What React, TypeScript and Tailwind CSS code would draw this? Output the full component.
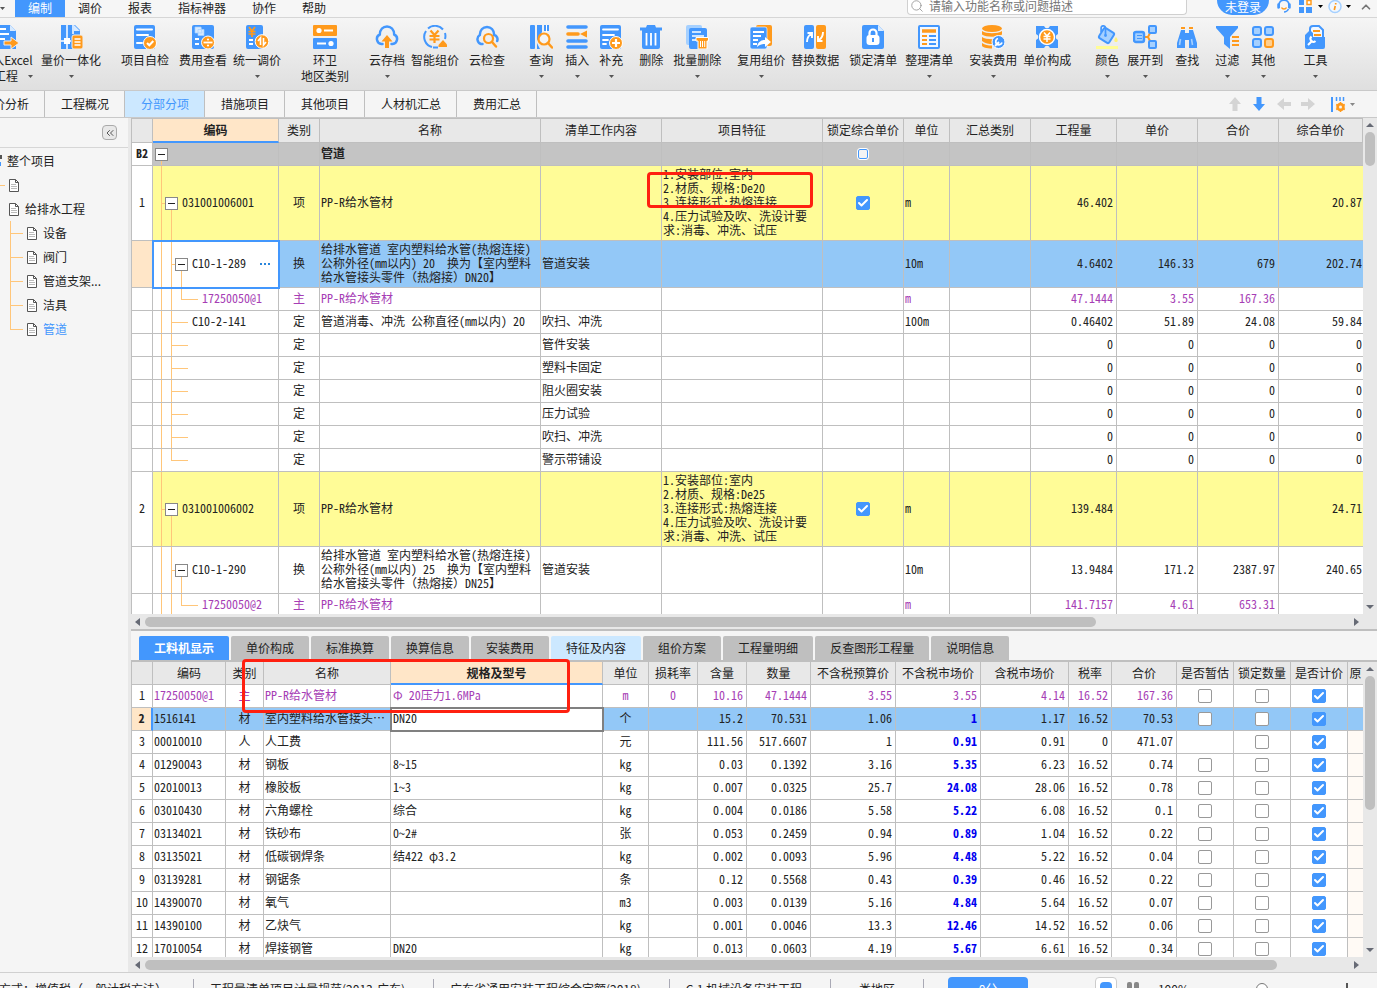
import React from 'react';
import { Check, ChevronUp, ChevronsLeft, Search } from 'lucide-react';

const B = '#4397fd';
const O = '#ff9a1c';
const L = '#a5d0ff';

const ICONS: Record<string, React.ReactNode> = {
  excel: (
    <>
      <path d="M1 0h14l6 6v18H1z" fill={B} />
      <path d="M15 0v6h6z" fill="#d7eaff" />
      <path d="M5 4h6M5 9h9M5 14h5" stroke="#fff" strokeWidth="2" />
      <path d="M9 16h7v-4l8 6-8 6v-4H9z" fill={O} stroke="#eee" />
    </>
  ),
  quantity: (
    <>
      <path d="M2 0h14l5 5v19H2z" fill={B} />
      <path d="M15 0v6h6z" fill="#d7eaff" />
      <path d="M8 0v24M2 16h10M14 0v9" stroke="#fff" strokeWidth="1.5" />
      <path d="M5 13h6v6H5z" fill="#fff" />
      <rect x="13" y="10" width="11" height="14" rx="2" fill={O} stroke="#eee" />
      <path d="M15.500 14h6M15.500 17h6M15.500 20h6" stroke="#fff" strokeWidth="1.300" />
    </>
  ),
  selfCheck: (
    <>
      <rect x="1" width="21" height="24" rx="2" fill={B} />
      <path d="M4 4.500h15M4 10h11M4 18h5" stroke="#fff" strokeWidth="2" strokeLinecap="round" />
      <circle cx="17" cy="18" r="6.500" fill={O} stroke="#fff" />
      <path d="M14 18l2.300 2.300 4-4.300" fill="none" stroke="#fff" strokeWidth="2" />
    </>
  ),
  feeView: (
    <>
      <rect x="1" width="22" height="24" rx="2" fill={B} />
      <path d="M4 2h6l1 6H4zM7 4.500h6v6H7z" fill="#d7eaff" stroke={L} strokeWidth="0.700" />
      <path d="M4 14h4M4 19h4" stroke="#fff" strokeWidth="2" />
      <circle cx="17" cy="17.500" r="6.500" fill={O} stroke="#fff" />
      <path d="M12.500 17.500h9" stroke="#fff" strokeWidth="1.800" />
      <circle cx="17" cy="14.500" r="1.100" fill="#fff" />
      <circle cx="17" cy="20.500" r="1.100" fill="#fff" />
    </>
  ),
  adjust: (
    <>
      <rect x="1" width="17" height="24" rx="2" fill={B} />
      <path d="M4 2l3 4 3-4M3.500 6.500h7M3.500 9h7M7 6v6" fill="none" stroke={O} strokeWidth="1.700" />
      <path d="M4 15h4M4 19h4" stroke="#fff" strokeWidth="2" />
      <circle cx="17" cy="16.500" r="6.800" fill={O} stroke="#fff" />
      <path d="M13 16l2.500-3v7M21 17l-2.500 3v-7" fill="none" stroke="#fff" strokeWidth="1.600" />
    </>
  ),
  region: (
    <>
      <rect width="24" height="11" rx="1" fill={O} />
      <rect y="13" width="24" height="11" rx="1" fill={B} />
      <path d="M11 5.500h9M4 18.500h9" stroke="#fff" strokeWidth="2" />
      <circle cx="6" cy="5.500" r="2.600" fill="#fff" />
      <circle cx="18" cy="18.500" r="2.600" fill="#fff" />
    </>
  ),
  cloudSave: (
    <>
      <path d="M7.500 19H6.500A5 5 0 0 1 4.800 9.500C5 4.500 8 1.500 12 1.500s7 3 7.200 8A5 5 0 0 1 17.500 19H16.500" fill="none" stroke={B} strokeWidth="2.500" strokeLinecap="round" />
      <path d="M12 10l5.500 6.500h-3.500V23h-4v-6.500H6.500z" fill={O} />
    </>
  ),
  smartPrice: (
    <>
      <path d="M9 22A10.500 10.500 0 0 1 3 6M5 3.500A10.500 10.500 0 0 1 20 4.500M22 8a10.500 10.500 0 0 1 0 6M10 22.500h5" fill="none" stroke={B} strokeWidth="2" />
      <path d="M7.500 5.500l4 4.500 4-4.500M6.500 11h10M6.500 14.500h10M11.500 10v8" fill="none" stroke={O} strokeWidth="2.200" />
      <path d="M15.500 20l4.500-5 4.500 5v2h-9z" fill={O} />
    </>
  ),
  cloudCheck: (
    <>
      <path d="M7.500 19H6A5 5 0 0 1 4.800 10C5 5 8 2 12 2s7 3 7.200 8a4.500 4.500 0 0 1 3 6" fill="none" stroke={B} strokeWidth="2.500" strokeLinecap="round" />
      <circle cx="13.500" cy="13.500" r="4.500" fill="none" stroke={O} strokeWidth="2.200" />
      <path d="M17 17l4 4.500" stroke={O} strokeWidth="2.500" strokeLinecap="round" />
    </>
  ),
  query: (
    <>
      <rect x="1" width="5" height="24" rx="1" fill={B} />
      <path d="M8 0h5v7l-5 9zM15 0h5v6h-5zM8 18l3 6H8z" fill={B} />
      <path d="M17.500 0v7" stroke="#fff" strokeWidth="1" />
      <circle cx="15" cy="14" r="5.500" fill="#f4f4f4" stroke={O} strokeWidth="2.200" />
      <path d="M19 18l4 4.500" stroke={O} strokeWidth="2.500" strokeLinecap="round" />
    </>
  ),
  insert: (
    <>
      <path d="M3 2h18M3 16h18M3 22h18" stroke={B} strokeWidth="3.600" strokeLinecap="round" />
      <path d="M3 9h10" stroke={O} strokeWidth="3.600" strokeLinecap="round" />
      <path d="M22 5.500v7L15 9z" fill={O} />
    </>
  ),
  supplement: (
    <>
      <rect x="1" width="21" height="24" rx="2" fill={B} />
      <path d="M4 4.500h15M4 10h11M4 15h5M4 19h3" stroke="#fff" strokeWidth="1.800" strokeLinecap="round" />
      <circle cx="17" cy="18" r="6.500" fill={O} stroke="#fff" />
      <path d="M13 18h8M17 14v8" stroke="#fff" strokeWidth="2.200" />
    </>
  ),
  remove: (
    <>
      <path d="M8 0h8l1 2.500h6v3H1v-3h6zM3 7h18v15a2 2 0 0 1-2 2H5a2 2 0 0 1-2-2z" fill={B} />
      <path d="M3 5h18v3H3z" fill={B} />
      <path d="M7.500 8v12.500M12 8v12.500M16.500 8v12.500" stroke="#fff" strokeWidth="1.800" />
    </>
  ),
  batchRemove: (
    <>
      <rect x="1" width="16" height="20" rx="2" fill={L} />
      <rect x="4" y="3" width="18" height="21" rx="2" fill={B} />
      <path d="M7 7h9M7 11h12M7 15h4" stroke="#cfe6ff" strokeWidth="1.800" />
      <path d="M11 12.500h12.500V16H22v8H13v-8h-2z" fill={O} stroke="#fff" />
      <path d="M15.500 16v6M17.500 16v6M19.700 16v6" stroke="#fff" strokeWidth="1" />
    </>
  ),
  reuse: (
    <>
      <rect x="7" width="16" height="21" rx="2" fill={O} />
      <rect x="1" y="2" width="17" height="22" rx="2" fill={B} stroke="#fff" strokeWidth="0.600" />
      <path d="M4 7h11M4 11h8M4 15h5M4 19h4" stroke="#fff" strokeWidth="1.800" />
      <path d="M8 22c1-5 4-7 8-7v-3l6 5-6 5v-3c-3 0-5 .500-8 3z" fill="#fff" />
    </>
  ),
  replace: (
    <>
      <rect x="1" width="10" height="24" rx="2" fill={B} />
      <rect x="13" width="10" height="24" rx="2" fill={O} />
      <path d="M4 17c0-4 1-6 4-8M4.500 8H9v5M20 7c0 4-1 6-4 8M15 11v5h4.500" fill="none" stroke="#fff" strokeWidth="1.900" />
    </>
  ),
  lock: (
    <>
      <path d="M3 0h14l6 6v16a2 2 0 0 1-2 2H3a2 2 0 0 1-2-2V2a2 2 0 0 1 2-2z" fill={B} />
      <path d="M17 0v6h6z" fill="#d7eaff" />
      <path d="M8.500 11V8a3.500 3.500 0 0 1 7 0v3" fill="none" stroke="#fff" strokeWidth="2.200" />
      <rect x="5.500" y="10" width="13" height="10" rx="3" fill="#fff" />
      <path d="M12 13v4" stroke={B} strokeWidth="2" />
    </>
  ),
  arrange: (
    <>
      <rect x="2" y="1" width="20" height="22" rx="1" fill="#f2f8ff" stroke={B} strokeWidth="2" />
      <path d="M5 6h14" stroke={O} strokeWidth="3.500" />
      <path d="M5 11h5M5 15h5M5 19h5" stroke={O} strokeWidth="2" />
      <path d="M12 11h7M12 15h7M12 19h7" stroke={B} strokeWidth="2" />
    </>
  ),
  install: (
    <>
      <ellipse cx="11" cy="3.500" rx="10" ry="3.500" fill={O} />
      <path d="M1 6c4 3 16 3 20 0v3.500c-4 3-16 3-20 0zM1 12c4 3 16 3 20 0v2c-4 2-7 4-9 5-4 0-8-.500-11-3zM1 18c3 2 6 2.500 10 2.500v3c-5 0-10-1-10-3z" fill={O} />
      <circle cx="17.500" cy="17" r="6.500" fill={B} stroke="#fff" />
      <path d="M14 21l4-4M17 13.500a3.200 3.200 0 1 0 4 4" fill="none" stroke="#fff" strokeWidth="1.800" />
    </>
  ),
  unitPrice: (
    <>
      <path d="M1 1h8l1.500 2h3L15 1h8v8l-2 1.500v3l2 1.500v8h-8l-1.500-2h-3L9 23H1v-8l2-1.500v-3L1 9z" fill={B} />
      <circle cx="12" cy="12" r="7.500" fill={O} stroke="#fff" strokeWidth="1.500" />
      <path d="M9 7.500l3 3.500 3-3.500M8.500 11.500h7M8.500 14h7M12 11v6" fill="none" stroke="#fff" strokeWidth="1.500" />
    </>
  ),
  color: (
    <>
      <rect x="5.500" y="4.500" width="12" height="12" rx="2" transform="rotate(32 11.500 10.500)" fill={L} stroke={B} strokeWidth="2" />
      <path d="M10.500 10V3a2.200 2.200 0 0 0-4.400 0v4" fill="none" stroke={B} strokeWidth="1.700" />
      <circle cx="10.500" cy="10.500" r="1.400" fill={B} />
      <path d="M21 12c2.500 3 2 5 0 5s-2.500-2 0-5z" fill="#fff27a" />
      <path d="M1 22.500h22" stroke="#fffc96" strokeWidth="3" />
    </>
  ),
  expand: (
    <>
      <path d="M11 12h4l3-6M15 12l3 6" fill="none" stroke={O} strokeWidth="2" />
      <rect x="1" y="7" width="10" height="10" rx="2" fill={L} stroke={B} strokeWidth="2.400" />
      <path d="M4 10.500h5M4 13.500h5" stroke={B} />
      <rect x="16" y="1" width="7" height="7" rx="1" fill={L} stroke={B} strokeWidth="2" />
      <rect x="16" y="16" width="7" height="7" rx="1" fill={L} stroke={B} strokeWidth="2" />
    </>
  ),
  find: (
    <>
      <path d="M6 3h4M14 3h4" stroke={O} strokeWidth="2" />
      <path d="M6 5h4v18H2v-5zM14 5h4l4 13v5h-8z" fill={B} />
      <path d="M10 8h4v7h-4z" fill={B} />
      <path d="M5.500 14l-1 6M16.500 14l1 6" stroke={L} strokeWidth="1.600" />
    </>
  ),
  filter: (
    <>
      <path d="M1 1h22v2l-8 9v12l-6-5v-7L1 3z" fill={B} />
      <path d="M17 12h7M17 16h7M17 20h7" stroke={O} strokeWidth="1.800" />
    </>
  ),
  other: (
    <>
      <rect x="2" y="2" width="8" height="8" rx="2" fill={L} stroke={B} strokeWidth="2" />
      <rect x="14" y="2" width="8" height="8" rx="2" fill={L} stroke={B} strokeWidth="2" />
      <rect x="2" y="14" width="8" height="8" rx="2" fill={L} stroke={B} strokeWidth="2" />
      <rect x="14" y="14" width="8" height="8" rx="2" fill="#ffcf8f" stroke={O} strokeWidth="2" />
    </>
  ),
  tools: (
    <>
      <path d="M7 8V4a3 3 0 0 1 3-3h6l4 4v8" fill="#f2f8ff" stroke={B} strokeWidth="2" />
      <path d="M10 6h7M11 10h7" stroke={O} strokeWidth="2" />
      <path d="M2 10l5-5 3 3v4h12v10a2 2 0 0 1-2 2H4a2 2 0 0 1-2-2z" fill={B} />
      <path d="M5 20l4.500-4.500M8.500 11.500a3 3 0 0 0 4 4.500" fill="none" stroke="#fff" strokeWidth="2" />
    </>
  ),
};

const RIBBON = [
  { icon: 'quantity', label: '量价一体化', gap: 'ml-2', menu: true },
  { icon: 'selfCheck', label: '项目自检', gap: 'ml-5' },
  { icon: 'feeView', label: '费用查看', gap: 'ml-2.5' },
  { icon: 'adjust', label: '统一调价', gap: 'ml-1.5', menu: true },
  { icon: 'region', label: '环卫', second: '地区类别', gap: 'ml-5' },
  { icon: 'cloudSave', label: '云存档', gap: 'ml-5', menu: true },
  { icon: 'smartPrice', label: '智能组价', gap: 'ml-1.5' },
  { icon: 'cloudCheck', label: '云检查', gap: 'ml-2.5' },
  { icon: 'query', label: '查询', gap: 'ml-6', menu: true },
  { icon: 'insert', label: '插入', gap: 'ml-3', menu: true },
  { icon: 'supplement', label: '补充', gap: 'ml-2.5', menu: true },
  { icon: 'remove', label: '删除', gap: 'ml-4' },
  { icon: 'batchRemove', label: '批量删除', gap: 'ml-2.5', menu: true },
  { icon: 'reuse', label: '复用组价', gap: 'ml-4', menu: true },
  { icon: 'replace', label: '替换数据', gap: 'ml-1.5' },
  { icon: 'lock', label: '锁定清单', gap: 'ml-2.5' },
  { icon: 'arrange', label: '整理清单', gap: 'ml-2', menu: true },
  { icon: 'install', label: '安装费用', gap: 'ml-4', menu: true },
  { icon: 'unitPrice', label: '单价构成', gap: 'ml-1.5' },
  { icon: 'color', label: '颜色', gap: 'ml-6', menu: true },
  { icon: 'expand', label: '展开到', gap: 'ml-2', menu: true },
  { icon: 'find', label: '查找', gap: 'ml-3' },
  { icon: 'filter', label: '过滤', gap: 'ml-4', menu: true },
  { icon: 'other', label: '其他', gap: 'ml-3', menu: true },
  { icon: 'tools', label: '工具', gap: 'ml-7', menu: true },
];

type RowKind = 'group' | 'item' | 'selected' | 'quota' | 'main' | 'work' | 'lastWork';

interface BillRow {
  no?: string;
  kind: RowKind;
  code?: string;
  type?: string;
  name?: string;
  work?: string;
  feature?: string;
  unit?: string;
  nums?: string[];
}

const feature = (de: string) =>
  `1.安装部位:室内\n2.材质、规格:${de}\n3.连接形式:热熔连接\n4.压力试验及吹、洗设计要\n求:消毒、冲洗、试压`;
const quotaName = (dn: string) =>
  `给排水管道 室内塑料给水管(热熔连接)\n公称外径(mm以内) ${dn}  换为【室内塑料\n给水管接头零件（热熔接）DN${dn}】`;
const ZERO = ['0', '0', '0', '0'];

const BILL_ROWS: BillRow[] = [
  { no: 'B2', kind: 'group', name: '管道' },
  { no: '1', kind: 'item', code: '031001006001', type: '项', name: 'PP-R给水管材', feature: feature('De20'), unit: 'm', nums: ['46.402', '', '', '20.87'] },
  { kind: 'selected', code: 'C10-1-289', type: '换', name: quotaName('20'), work: '管道安装', unit: '10m', nums: ['4.6402', '146.33', '679', '202.74'] },
  { kind: 'main', code: '17250050@1', type: '主', name: 'PP-R给水管材', unit: 'm', nums: ['47.1444', '3.55', '167.36', ''] },
  { kind: 'work', code: 'C10-2-141', type: '定', name: '管道消毒、冲洗 公称直径(mm以内) 20', work: '吹扫、冲洗', unit: '100m', nums: ['0.46402', '51.89', '24.08', '59.84'] },
  { kind: 'work', type: '定', work: '管件安装', nums: ZERO },
  { kind: 'work', type: '定', work: '塑料卡固定', nums: ZERO },
  { kind: 'work', type: '定', work: '阻火圈安装', nums: ZERO },
  { kind: 'work', type: '定', work: '压力试验', nums: ZERO },
  { kind: 'work', type: '定', work: '吹扫、冲洗', nums: ZERO },
  { kind: 'lastWork', type: '定', work: '警示带铺设', nums: ZERO },
  { no: '2', kind: 'item', code: '031001006002', type: '项', name: 'PP-R给水管材', feature: feature('De25'), unit: 'm', nums: ['139.484', '', '', '24.71'] },
  { kind: 'quota', code: 'C10-1-290', type: '换', name: quotaName('25'), work: '管道安装', unit: '10m', nums: ['13.9484', '171.2', '2387.97', '240.65'] },
  { kind: 'main', code: '17250050@2', type: '主', name: 'PP-R给水管材', unit: 'm', nums: ['141.7157', '4.61', '653.31', ''] },
];

const ROW_STYLE: Record<RowKind, string> = {
  group: 'h-[23px] bg-[#c4c4c4] font-bold',
  item: 'h-[75px] bg-[#fffc97]',
  selected: 'h-[47px] bg-[#93c8f7]',
  quota: 'h-[47px] bg-white',
  main: 'h-[23px] bg-white text-[#a63db5]',
  work: 'h-[23px] bg-white',
  lastWork: 'h-[23px] bg-white',
};

// code, type, name, spec, unit, loss, content, qty, budget, market, taxed market, rate, total
const MATERIALS = [
  ['17250050@1', '主', 'PP-R给水管材', 'Φ 20压力1.6MPa', 'm', '0', '10.16', '47.1444', '3.55', '3.55', '4.14', '16.52', '167.36'],
  ['1516141', '材', '室内塑料给水管接头⋯', 'DN20', '个', '', '15.2', '70.531', '1.06', '1', '1.17', '16.52', '70.53'],
  ['00010010', '人', '人工费', '', '元', '', '111.56', '517.6607', '1', '0.91', '0.91', '0', '471.07'],
  ['01290043', '材', '钢板', '8~15', 'kg', '', '0.03', '0.1392', '3.16', '5.35', '6.23', '16.52', '0.74'],
  ['02010013', '材', '橡胶板', '1~3', 'kg', '', '0.007', '0.0325', '25.7', '24.08', '28.06', '16.52', '0.78'],
  ['03010430', '材', '六角螺栓', '综合', 'kg', '', '0.004', '0.0186', '5.58', '5.22', '6.08', '16.52', '0.1'],
  ['03134021', '材', '铁砂布', '0~2#', '张', '', '0.053', '0.2459', '0.94', '0.89', '1.04', '16.52', '0.22'],
  ['03135021', '材', '低碳钢焊条', '结422 φ3.2', 'kg', '', '0.002', '0.0093', '5.96', '4.48', '5.22', '16.52', '0.04'],
  ['03139281', '材', '钢锯条', '', '条', '', '0.12', '0.5568', '0.43', '0.39', '0.46', '16.52', '0.22'],
  ['14390070', '材', '氧气', '', 'm3', '', '0.003', '0.0139', '5.16', '4.84', '5.64', '16.52', '0.07'],
  ['14390100', '材', '乙炔气', '', 'kg', '', '0.001', '0.0046', '13.3', '12.46', '14.52', '16.52', '0.06'],
  ['17010054', '材', '焊接钢管', 'DN20', 'kg', '', '0.013', '0.0603', '4.19', '5.67', '6.61', '16.52', '0.34'],
];

const MATERIAL_ALIGN = [
  'pl-px', 'text-center', 'pl-px', 'pl-0.5', 'text-center', 'text-center',
  'pr-[3px] text-right', 'pr-[3px] text-right', 'pr-[3px] text-right', 'pr-[3px] text-right',
  'pr-[3px] text-right', 'pr-[3px] text-right', 'pr-[3px] text-right',
];

const DETAIL_TABS = ['工料机显示', '单价构成', '标准换算', '换算信息', '安装费用', '特征及内容', '组价方案', '工程量明细', '反查图形工程量', '说明信息'];

const TH = 'border-b border-r border-[#bfbfbf] bg-[#e8e8e8] p-0 pb-px text-center font-normal whitespace-nowrap';
const TH_ACTIVE = 'border-r border-[#bfbfbf] border-b-2 border-b-[#4397fd] bg-[#ffe6c8] p-0 text-center font-bold';
const TD_BASE = 'border-b border-r border-[#bfbfbf] p-0 whitespace-pre overflow-hidden';
const TD = `${TD_BASE} pb-0.5`;

const Caret = ({ className = 'text-[#555]' }: { className?: string }) => (
  <svg className={className} width="5" height="3" viewBox="0 0 5 3" fill="currentColor">
    <path d="M0 0h5L2.500 3z" />
  </svg>
);

const RibbonIcon = ({ name }: { name: string }) => (
  <svg className="h-6 w-6" viewBox="0 0 24 24">{ICONS[name]}</svg>
);

const Tick = ({ label, checked = false, small = false }: { label: string; checked?: boolean; small?: boolean }) => (
  <span className="flex justify-center">
    <span className="grid">
      <input
        type="checkbox"
        aria-label={label}
        defaultChecked={checked}
        className={
          small
            ? 'm-px h-2.5 w-2.5 appearance-none rounded-xs border border-[#4397fd] bg-[#f4f4f4] outline outline-white'
            : 'peer h-3.5 w-3.5 appearance-none rounded-xs border border-[#999] bg-white [grid-area:1/1] checked:border-[#4397fd] checked:bg-[#4397fd]'
        }
      />
      <Check className="pointer-events-none hidden h-3.5 w-3.5 p-px text-white [grid-area:1/1] peer-checked:block" strokeWidth={4} />
    </span>
  </span>
);

const Pass = () => <span className="w-2.5 shrink-0 self-stretch border-l border-[#ffc67a]" />;

const Branch = ({ width, last = false }: { width: string; last?: boolean }) => (
  <span className={`flex shrink-0 flex-col self-stretch ${width}`}>
    <span className="flex-1 border-b border-l border-[#ffc67a]" />
    <span className={last ? 'flex-1' : 'flex-1 border-l border-[#ffc67a]'} />
  </span>
);

const Expander = () => (
  <span className="flex w-[11px] shrink-0 flex-col items-center self-stretch">
    <span className="flex-1" />
    <button aria-label="折叠" className="flex h-[13px] w-[13px] items-center justify-center border border-[#888] bg-white">
      <span className="h-px w-[7px] bg-[#222]" />
    </button>
    <span className="flex-1 border-l border-[#ffc67a]" />
  </span>
);

const Code = ({ text }: { text?: string }) => <span className="ml-1 pb-0.5">{text}</span>;

const CodeCell = ({ row }: { row: BillRow }) => {
  switch (row.kind) {
    case 'group':
      return <div className="flex h-full items-center pl-[3px]"><Expander /></div>;
    case 'item':
      return (
        <div className="flex h-full items-center pl-2">
          <Branch width="w-[5px]" /><Expander /><span className="w-px" /><Code text={row.code} />
        </div>
      );
    case 'selected':
    case 'quota':
      return (
        <div className="flex h-full items-center pl-2">
          <Pass /><Branch width="w-[5px]" /><Expander /><span className="w-px" /><Code text={row.code} />
          {row.kind === 'selected' && (
            <button aria-label="更多" className="mr-2 ml-auto flex gap-0.5">
              <span className="h-0.5 w-0.5 bg-[#2a86dc]" />
              <span className="h-0.5 w-0.5 bg-[#2a86dc]" />
              <span className="h-0.5 w-0.5 bg-[#2a86dc]" />
            </button>
          )}
        </div>
      );
    case 'main':
      return (
        <div className="flex h-full items-center pl-2">
          <Pass /><Pass /><Branch width="w-[17px]" last /><Code text={row.code} />
        </div>
      );
    default:
      return (
        <div className="flex h-full items-center pl-2">
          <Pass /><Branch width="w-[17px]" last={row.kind === 'lastWork'} /><Code text={row.code} />
        </div>
      );
  }
};

const VScroll = ({ thumb }: { thumb: string }) => (
  <div className="flex w-3.5 shrink-0 flex-col items-center bg-[#e8e8e8] pt-1">
    <svg className="my-px shrink-0" width="8" height="4" viewBox="0 0 8 4" fill="#666a75"><path d="M0 4l4-4 4 4z" /></svg>
    <div className={`mt-1 w-2.5 shrink-0 rounded-full bg-[#bfbfbf] ${thumb}`} />
    <svg className="mt-auto mb-5 shrink-0" width="8" height="4" viewBox="0 0 8 4" fill="#666a75"><path d="M0 0h8L4 4z" /></svg>
  </div>
);

const HScroll = ({ thumb }: { thumb: string }) => (
  <div className="flex h-[15px] shrink-0 items-center gap-[5px] bg-[#e8e8e8] px-1">
    <svg className="shrink-0" width="5" height="8" viewBox="0 0 5 8" fill="#666a75"><path d="M5 0v8L0 4z" /></svg>
    <div className="flex-1">
      <div className={`h-2.5 rounded-full bg-[#bfbfbf] ${thumb}`} />
    </div>
    <svg className="shrink-0" width="5" height="8" viewBox="0 0 5 8" fill="#666a75"><path d="M0 0v8l5-4z" /></svg>
  </div>
);

const MenuBar = () => (
  <nav className="flex h-[18px] shrink-0 items-start border-b border-[#d6d6d6] bg-[#f6f6f6] leading-[15px]">
    <span className="flex h-[17px] w-[15px] items-center"><Caret /></span>
    <button className="h-[17px] bg-[#4397fd] px-[13px] pb-0.5 text-white">编制</button>
    {['调价', '报表', '指标神器', '协作', '帮助'].map((m) => (
      <button key={m} className="px-[13px]">{m}</button>
    ))}
    <label className="ml-auto flex h-[15px] w-[280px] items-center gap-[5px] rounded-b border border-t-0 border-[#d0d0d0] bg-white pb-0.5 pl-0.5">
      <Search className="h-3.5 w-3.5 text-[#999]" strokeWidth={1.5} />
      <input aria-label="搜索" placeholder="请输入功能名称或问题描述" className="h-3.5 flex-1 leading-[14px] outline-none placeholder:text-[#777]" />
    </label>
    <button className="ml-[30px] h-[15px] w-[52px] rounded-b-full bg-[#4397fd] pb-px leading-[14px] text-white">未登录</button>
    <button aria-label="客服" className="ml-2">
      <svg width="14" height="13" viewBox="0 0 14 13" fill="none">
        <path d="M2 8V5a5 5 0 0 1 10 0v3" stroke={B} strokeWidth="1.800" />
        <path d="M1.500 4.500v3M12.500 4.500v3" stroke={B} strokeWidth="2.500" strokeLinecap="round" />
        <path d="M11.500 9c-1 2-2.500 3-4.500 3" stroke={B} strokeWidth="1.500" />
        <path d="M4.500 7.500c1 2 4 2 5 0" stroke={O} strokeWidth="1.500" />
      </svg>
    </button>
    <button aria-label="应用" className="ml-2 flex h-[13px] items-center gap-1.5">
      <svg width="13" height="13" viewBox="0 0 13 13">
        <path d="M0 0h5v5H0zM0 7h5v6H0zM7 7h6v6H7z" fill={B} />
        <path d="M8 0.500h4v4H8z" fill="#fff" stroke={O} strokeWidth="1.500" />
      </svg>
      <Caret className="text-black" />
    </button>
    <button aria-label="信息" className="ml-[5px] flex h-[13px] items-center gap-1">
      <svg width="14" height="14" viewBox="0 0 14 14" fill="none">
        <circle cx="7" cy="6.500" r="6" fill="#f2f8ff" stroke={L} strokeWidth="1.500" />
        <path d="M7.700 3v1.600M7.200 6l-.900 4" stroke={O} strokeWidth="1.700" />
      </svg>
      <Caret className="text-black" />
    </button>
    <button aria-label="收起" className="mr-1 ml-2 text-[#777]"><ChevronUp className="h-3.5 w-3.5" strokeWidth={3} /></button>
  </nav>
);

const Ribbon = () => (
  <div className="flex h-[73px] shrink-0 items-start overflow-hidden border-b border-[#c9c9c9] bg-linear-to-b from-[#f5f5f5] to-[#dfdfdf] pt-[7px] leading-4 whitespace-nowrap">
    <button className="-ml-5 flex w-[53px] shrink-0 flex-col items-center">
      <RibbonIcon name="excel" />
      <span className="mt-[3px]">导入Excel</span>
      <span className="flex items-center gap-2.5 self-end">工程<Caret /></span>
    </button>
    {RIBBON.map((r) => (
      <button key={r.label} className={`flex shrink-0 flex-col items-center ${r.gap}`}>
        <RibbonIcon name={r.icon} />
        <span className="mt-[3px]">{r.label}</span>
        {r.second && <span>{r.second}</span>}
        {r.menu && <span className="flex h-4 items-center"><Caret /></span>}
      </button>
    ))}
  </div>
);

const ARROWS = [
  { label: '上移', color: 'text-[#d4d4d4]', d: 'M6 0l6 7H8.500v7h-5V7H0z' },
  { label: '下移', color: 'text-[#4397fd]', d: 'M6 14l6-7H8.500V0h-5v7H0z' },
  { label: '左移', color: 'text-[#d4d4d4]', d: 'M0 7l7-6v4h7v4H7v4z' },
  { label: '右移', color: 'text-[#d4d4d4]', d: 'M14 7L7 1v4H0v4h7v4z' },
];

const PageTabs = () => (
  <div className="flex h-[27px] shrink-0 items-stretch border-b border-[#c9c9c9] bg-[#f5f5f5]">
    {['造价分析', '工程概况', '分部分项', '措施项目', '其他项目', '人材机汇总', '费用汇总'].map((t, i) => (
      <button
        key={t}
        className={`border-r border-[#bfbfbf] px-[15px] pl-4 ${i === 0 ? '-ml-[35px]' : ''} ${t === '分部分项' ? 'bg-[#cce8ff] text-[#4397fd]' : ''}`}
      >
        {t}
      </button>
    ))}
    <div className="mr-[22px] ml-auto flex items-center gap-2.5">
      {ARROWS.map((a) => (
        <button key={a.label} aria-label={a.label} className={a.color}>
          <svg width="14" height="14" viewBox="0 0 14 14" fill="currentColor"><path d={a.d} /></svg>
        </button>
      ))}
      <button aria-label="列设置" className="ml-1.5 flex items-center gap-1">
        <svg width="15" height="15" viewBox="0 0 15 15">
          <path d="M1 0v15" stroke={B} strokeWidth="2" />
          <path d="M5.500 0v4M9 0v4M12.500 0v4" stroke={B} strokeWidth="1.500" />
          <circle cx="9.500" cy="10" r="3" fill="none" stroke={O} strokeWidth="2.500" />
          <path d="M9.500 5v10M5.200 7.500l8.600 5M5.200 12.500l8.600-5" stroke={O} strokeWidth="1.500" />
          <circle cx="9.500" cy="10" r="1.500" fill="#f5f5f5" />
        </svg>
        <Caret className="text-[#888]" />
      </button>
    </div>
  </div>
);

const DocIcon = () => (
  <svg className="shrink-0" width="10" height="13" viewBox="0 0 10 13" fill="none">
    <path d="M.5.500h6l3 3v9h-9z" fill="#fff" stroke="#555" />
    <path d="M6.500.500v3h3" stroke="#555" />
    <path d="M2 5.500h5M2 7.500h6M2 9.500h6" stroke="#bbb" />
  </svg>
);

const ProjectTree = () => (
  <aside className="flex w-[131px] shrink-0 flex-col border-r-[3px] border-[#e8e8e8] bg-[#f5f5f5]">
    <div className="mb-px flex h-[30px] items-center justify-end border-b border-[#d6d6d6] pr-[11px]">
      <button aria-label="收起目录" className="flex h-[15px] w-[15px] items-center justify-center rounded-sm border border-[#aaa] bg-[#e8e8e8] text-[#555]">
        <ChevronsLeft className="h-3 w-3" />
      </button>
    </div>
    <button className="flex h-6 items-center gap-1">
      <svg width="3" height="12" viewBox="0 0 3 12"><path d="M0 0h2v4H0z" fill="#555" /><path d="M0 7h1v4H0z" fill={B} /></svg>
      整个项目
    </button>
    <button aria-label="单项工程" className="flex h-6 items-center">
      <span className="mr-1 h-px w-[5px] bg-[#ffc67a]" />
      <DocIcon />
    </button>
    <button className="flex h-6 items-center gap-1.5 pl-[9px]"><DocIcon />给排水工程</button>
    {['设备', '阀门', '管道支架...', '洁具', '管道'].map((n) => (
      <button key={n} className="flex h-6 items-center pl-2.5">
        <Branch width="w-[13px]" last={n === '管道'} />
        <span className="ml-1 flex items-center gap-1.5">
          <DocIcon />
          <span className={n === '管道' ? 'text-[#4397fd]' : ''}>{n}</span>
        </span>
      </button>
    ))}
  </aside>
);

const BillGrid = () => (
  <table className="w-full table-fixed border-separate border-spacing-0 border-t border-l border-[#bfbfbf]">
    <colgroup>
      <col className="w-[21px]" /><col className="w-[126px]" /><col className="w-[41px]" /><col className="w-[221px]" />
      <col className="w-[121px]" /><col className="w-[161px]" /><col className="w-[81px]" /><col className="w-[46px]" />
      <col className="w-[81px]" /><col className="w-[86px]" /><col className="w-[81px]" /><col className="w-[81px]" /><col />
    </colgroup>
    <thead>
      <tr className="h-6">
        <th className={TH} />
        <th className={TH_ACTIVE}>编码</th>
        {['类别', '名称', '清单工作内容', '项目特征', '锁定综合单价', '单位', '汇总类别', '工程量', '单价', '合价', '综合单价'].map((h) => (
          <th key={h} className={TH}>{h}</th>
        ))}
      </tr>
    </thead>
    <tbody>
      {BILL_ROWS.map((row, i) => (
        <tr key={i} className={ROW_STYLE[row.kind]}>
          <td className={`${TD} text-center ${row.kind === 'selected' ? 'bg-[#ffe6c8]' : 'bg-white'}`}>{row.no}</td>
          <td className={`${TD_BASE} h-[inherit] ${row.kind === 'selected' ? 'bg-white outline-2 -outline-offset-1 outline-[#4397fd]' : ''}`}>
            <CodeCell row={row} />
          </td>
          <td className={`${TD} text-center`}>{row.type}</td>
          <td className={`${TD} pl-px`}>{row.name}</td>
          <td className={`${TD} pl-px`}>{row.work}</td>
          <td className={`${TD} pl-px`}>{row.feature}</td>
          <td className={TD_BASE}>
            {row.kind === 'group' && <Tick small label="锁定综合单价" />}
            {row.kind === 'item' && <Tick checked label="锁定综合单价" />}
          </td>
          <td className={`${TD} pl-px`}>{row.unit}</td>
          <td className={TD} />
          {[0, 1, 2, 3].map((n) => (
            <td key={n} className={n === 3 ? `${TD} border-r-0 pr-px text-right` : `${TD} pr-[3px] text-right`}>{row.nums?.[n]}</td>
          ))}
        </tr>
      ))}
    </tbody>
  </table>
);

const MaterialGrid = () => (
  <table className="w-full table-fixed border-separate border-spacing-0 border-l border-[#bfbfbf]">
    <colgroup>
      <col className="w-[21px]" /><col className="w-[73px]" /><col className="w-[38px]" /><col className="w-[127px]" />
      <col className="w-[212px]" /><col className="w-[46px]" /><col className="w-[49px]" /><col className="w-[49px]" />
      <col className="w-[64px]" /><col className="w-[85px]" /><col className="w-[85px]" /><col className="w-[88px]" />
      <col className="w-[43px]" /><col className="w-[65px]" /><col className="w-[57px]" /><col className="w-[57px]" />
      <col className="w-[57px]" /><col />
    </colgroup>
    <thead>
      <tr className="h-[23px]">
        <th className={TH} />
        {['编码', '类别', '名称'].map((h) => <th key={h} className={TH}>{h}</th>)}
        <th className={TH_ACTIVE}>规格及型号</th>
        {['单位', '损耗率', '含量', '数量', '不含税预算价', '不含税市场价', '含税市场价', '税率', '合价', '是否暂估', '锁定数量', '是否计价'].map((h) => (
          <th key={h} className={TH}>{h}</th>
        ))}
        <th className={`${TH} border-r-0`}>原</th>
      </tr>
    </thead>
    <tbody>
      {MATERIALS.map((cells, r) => {
        const rowStyle = r === 0 ? 'bg-white text-[#a63db5]' : r === 1 ? 'bg-[#93c8f7]' : 'bg-white';
        return (
          <tr key={cells[0]} className={`h-[23px] ${rowStyle}`}>
            <td className={`${TD} text-center text-[#222] ${r === 1 ? 'border-r-2 border-r-[#4397fd] bg-[#ffe6c8] font-bold' : ''}`}>{r + 1}</td>
            {cells.map((c, n) => (
              <td
                key={n}
                className={`${TD} ${MATERIAL_ALIGN[n]} ${n === 9 && r > 0 ? 'font-bold text-[#0000f0]' : ''} ${n === 3 && r === 1 ? 'bg-white outline-2 -outline-offset-1 outline-[#808080]' : ''}`}
              >
                {c}
              </td>
            ))}
            <td className={TD_BASE}>{r !== 2 && <Tick label="是否暂估" />}</td>
            <td className={TD_BASE}><Tick label="锁定数量" /></td>
            <td className={TD_BASE}><Tick checked label="是否计价" /></td>
            <td className={`${TD} border-r-0 ${r > 1 ? 'bg-[#fffaf5]' : ''}`} />
          </tr>
        );
      })}
    </tbody>
  </table>
);

const StatusBar = () => (
  <footer className="h-4 shrink-0 overflow-hidden border-t border-[#d0d0d0] bg-[#f5f5f5]">
    <div className="flex h-8 items-center whitespace-nowrap">
      <span className="-ml-[25px] pr-[26px]">计税方式：增值税（一般计税方法）</span>
      {['工程量清单项目计量规范(2013-广东)', '广东省通用安装工程综合定额(2018)', 'C.1 机械设备安装工程', '一类地区'].map((s) => (
        <span key={s} className="flex items-center"><span className="h-5 w-px bg-[#a9a9b5]" /><span className="pr-7 pl-4">{s}</span></span>
      ))}
      <span className="h-5 w-px bg-[#a9a9b5]" />
      <button className="ml-6 h-6 w-20 rounded-sm bg-[#4397fd] text-white">0分</button>
      <div className="mr-6 ml-auto flex items-center">
        <button aria-label="单窗口" className="flex h-6 w-[22px] items-center justify-center rounded-sm border border-[#ccc] bg-white">
          <span className="h-3.5 w-3 rounded-sm bg-[#4397fd]" />
        </button>
        <button aria-label="双窗口" className="ml-2.5 flex gap-0.5">
          <span className="h-3.5 w-[5px] rounded-xs bg-[#888]" /><span className="h-3.5 w-[5px] rounded-xs bg-[#888]" />
        </button>
        <span className="ml-[19px]">100%</span>
        <button aria-label="缩小" className="ml-3 h-0.5 w-3 bg-[#555]" />
        <input
          type="range"
          aria-label="缩放"
          defaultValue={34}
          className="ml-2.5 h-0.5 w-[108px] appearance-none bg-[#bbb] [&::-webkit-slider-thumb]:h-3 [&::-webkit-slider-thumb]:w-3 [&::-webkit-slider-thumb]:appearance-none [&::-webkit-slider-thumb]:rounded-full [&::-webkit-slider-thumb]:border [&::-webkit-slider-thumb]:border-[#777] [&::-webkit-slider-thumb]:bg-white"
        />
        <button aria-label="放大" className="ml-2.5 text-[#555]">
          <svg width="12" height="12" viewBox="0 0 12 12"><path d="M0 6h12M6 0v12" stroke="currentColor" strokeWidth="2" /></svg>
        </button>
      </div>
    </div>
  </footer>
);

const GRID_FONT = "font-['Noto_Sans_Mono_CJK_SC','Noto_Sans_CJK_SC','Liberation_Mono',monospace] leading-[14px]";

export default function App() {
  return (
    <div className="flex h-screen flex-col overflow-hidden bg-[#f5f5f5] font-['Noto_Sans_CJK_SC',sans-serif] text-xs text-[#222]">
      <MenuBar />
      <Ribbon />
      <PageTabs />
      <div className="flex min-h-0 flex-1">
        <ProjectTree />
        <main className="flex min-w-0 flex-1 flex-col">
          <section className="relative flex min-h-0 flex-1 border-b-2 border-[#bfbfbf]">
            <div className="flex min-w-0 flex-1 flex-col">
              <div className={`min-h-0 flex-1 overflow-hidden ${GRID_FONT}`}><BillGrid /></div>
              <HScroll thumb="w-[79%]" />
            </div>
            <VScroll thumb="h-[34px]" />
            {/* review mark on the pipe spec */}
            <div className="pointer-events-none absolute top-[54px] left-[516px] h-9 w-[166px] rounded-sm border-3 border-[#ff2010]" />
          </section>
          <section className="relative flex h-[341px] shrink-0 flex-col">
            <div className="flex h-[31px] shrink-0 items-stretch gap-0.5 border-b-2 border-[#bfbfbf] pt-[5px] pl-2">
              {DETAIL_TABS.map((t, i) => (
                <button
                  key={t}
                  className={`rounded-t-xs px-[15px] ${i === 0 ? 'bg-[#4397fd] font-bold text-white' : t === '特征及内容' ? 'bg-[#cce8ff]' : 'bg-[#bfbfbf]'}`}
                >
                  {t}
                </button>
              ))}
            </div>
            <div className="flex min-h-0 flex-1">
              <div className="flex min-w-0 flex-1 flex-col">
                <div className={`min-h-0 flex-1 overflow-hidden ${GRID_FONT}`}><MaterialGrid /></div>
                <HScroll thumb="w-[94%]" />
              </div>
              <VScroll thumb="h-[134px]" />
            </div>
            {/* review mark on the material spec */}
            <div className="pointer-events-none absolute top-7 left-[111px] h-[54px] w-[328px] rounded-sm border-3 border-[#ff2010]" />
          </section>
        </main>
      </div>
      <StatusBar />
    </div>
  );
}
